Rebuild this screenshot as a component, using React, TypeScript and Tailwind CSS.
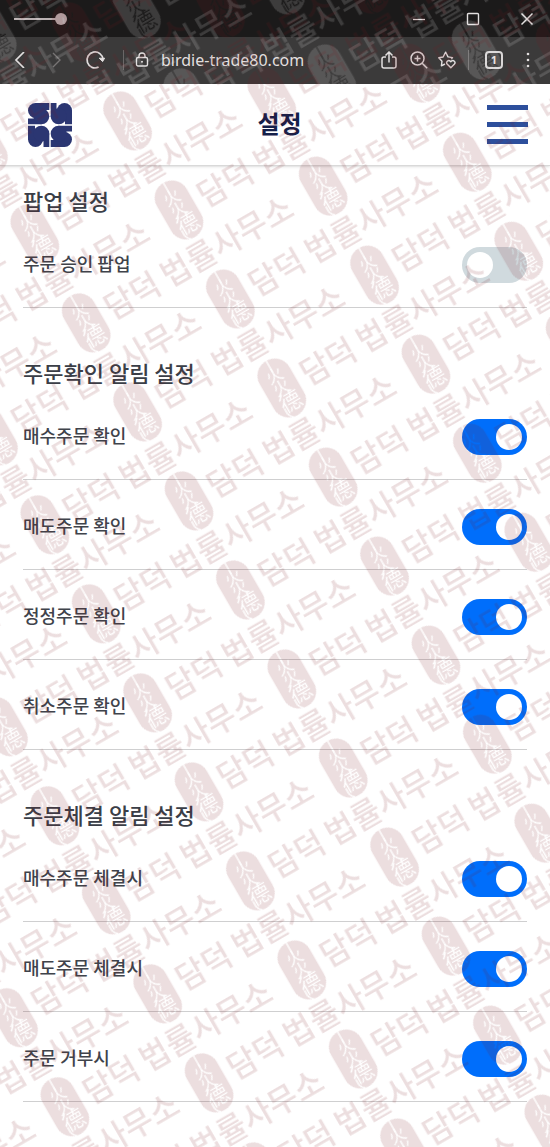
import { useId, useState } from "react";

const sections = [
  { title: "팝업 설정", items: [{ label: "주문 승인 팝업", on: false }] },
  {
    title: "주문확인 알림 설정",
    items: [
      { label: "매수주문 확인", on: true },
      { label: "매도주문 확인", on: true },
      { label: "정정주문 확인", on: true },
      { label: "취소주문 확인", on: true },
    ],
  },
  {
    title: "주문체결 알림 설정",
    items: [
      { label: "매수주문 체결시", on: true },
      { label: "매도주문 체결시", on: true },
      { label: "주문 거부시", on: true },
    ],
  },
];

type WatermarkProps = { x: number; y: number; ink: string };

/* Repeating diagonal stamp: an oval seal followed by the firm's name. */
function Watermark({ x, y, ink }: WatermarkProps) {
  const id = useId();
  const mark = `${id}-mark`;
  const tile = `${id}-tile`;
  const seal = `${id}-seal`;
  return (
    <svg aria-hidden="true" className="pointer-events-none absolute inset-0 h-full w-full">
      <defs>
        <mask id={seal} maskUnits="userSpaceOnUse" x="-20" y="-34" width="40" height="68">
          <rect x="-17.5" y="-31.5" width="35" height="63" rx="17.5" fill="white" />
          <g fill="black" textAnchor="middle" className="font-['Noto_Sans_CJK_KR',sans-serif]">
            <text x="0" y="-8" fontSize="17">火</text>
            <text x="0" y="5" fontSize="17">火</text>
            <text x="1" y="23" fontSize="22">德</text>
          </g>
          <path d="M0-31.5V-18M-8 19V25Q-7 29-4 31" fill="none" stroke="black" strokeWidth="1.4" />
        </mask>
        <g id={mark} fill={ink}>
          <rect x="-17.5" y="-31.5" width="35" height="63" rx="17.5" mask={`url(#${seal})`} />
          <g fontSize="32" className="font-['Noto_Sans_CJK_KR',sans-serif] font-medium">
            <text x="24" y="11">담덕</text>
            <text x="89" y="11">법률사무소</text>
          </g>
        </g>
        <pattern
          id={tile}
          width="273.6"
          height="102.8"
          patternUnits="userSpaceOnUse"
          patternTransform={`translate(${x} ${y}) rotate(-30) translate(-20 -51.4)`}
        >
          <use href={`#${mark}`} x="20" y="51.4" />
          <use href={`#${mark}`} x="156.8" y="0" />
          <use href={`#${mark}`} x="-116.8" y="0" />
          <use href={`#${mark}`} x="156.8" y="102.8" />
          <use href={`#${mark}`} x="-116.8" y="102.8" />
        </pattern>
      </defs>
      <rect width="100%" height="100%" fill={`url(#${tile})`} />
    </svg>
  );
}

function LogoPiece({ turn }: { turn: number }) {
  return (
    <g transform={`rotate(${turn} 22 22)`}>
      <circle cx="7.5" cy="7.5" r="7.5" />
      <path d="M7.5 0H21.3V7H7.5zM0 15.5H13.5V21.3H0z" />
      <circle cx="13.3" cy="13.3" r="8" />
    </g>
  );
}

function Logo() {
  return (
    <svg viewBox="0 0 44 44" className="size-11" fill="#2b3672" aria-hidden="true">
      <LogoPiece turn={0} />
      <LogoPiece turn={90} />
      <LogoPiece turn={180} />
      <LogoPiece turn={270} />
    </svg>
  );
}

function BrowserChrome() {
  return (
    <div className="relative overflow-hidden bg-[#1b1a1a] text-[#e2dfdf]">
      <div className="flex h-[37px] items-center justify-between pr-4 pl-[14px]">
        <svg viewBox="0 0 54 14" className="h-3.5 w-[54px]" fill="#b9b0b1" aria-hidden="true">
          <path d="M0 6h44v2H0z" />
          <circle cx="47" cy="7" r="6" />
        </svg>
        <div className="flex items-center gap-10">
          <button type="button" aria-label="최소화" className="size-3.5">
            <svg viewBox="0 0 14 14" stroke="currentColor" strokeWidth="1.3" fill="none">
              <path d="M1 7.5h12" />
            </svg>
          </button>
          <button type="button" aria-label="최대화" className="size-3.5">
            <svg viewBox="0 0 14 14" stroke="currentColor" strokeWidth="1.4" fill="none">
              <rect x="1.5" y="1.5" width="11" height="11" rx="1" />
            </svg>
          </button>
          <button type="button" aria-label="닫기" className="size-3.5">
            <svg viewBox="0 0 14 14" stroke="currentColor" strokeWidth="1.5" fill="none">
              <path d="M1.5 1.5l11 11M12.5 1.5l-11 11" />
            </svg>
          </button>
        </div>
      </div>
      <div className="flex h-[47px] items-center bg-white/14 pr-[17px] pb-0.5 pl-[13px]">
        <button type="button" aria-label="뒤로" className="size-4">
          <svg viewBox="0 0 16 16" stroke="currentColor" strokeWidth="1.7" fill="none">
            <path d="M11 0L3 8l8 8" />
          </svg>
        </button>
        <button type="button" aria-label="앞으로" className="ml-5 size-4 text-[#777474]">
          <svg viewBox="0 0 16 16" stroke="currentColor" strokeWidth="1.4" fill="none">
            <path d="M4 1l7 7-7 7" />
          </svg>
        </button>
        <button type="button" aria-label="새로고침" className="ml-5 size-5">
          <svg viewBox="0 0 20 20" stroke="currentColor" strokeWidth="1.7" fill="none">
            <path d="M13.6 17.1A8 8 0 1 1 18 9.4" />
            <path d="M14.2 8.2h5.4l-2 3.4z" fill="currentColor" strokeWidth="1" />
          </svg>
        </button>
        <span className="ml-[18px] h-5 w-px bg-[#6a6767]" />
        <svg
          viewBox="0 0 14 16"
          className="ml-[11px] h-4 w-3.5"
          stroke="currentColor"
          strokeWidth="1.4"
          fill="none"
          aria-hidden="true"
        >
          <rect x="1.5" y="5.5" width="11" height="8.5" rx="1.5" />
          <path d="M4 5.5V4a3 3 0 0 1 6 0v1.5" />
          <circle cx="7" cy="9.8" r="1" fill="currentColor" stroke="none" />
        </svg>
        <span className="ml-3 font-['Noto_Sans',sans-serif] text-base">birdie-trade80.com</span>
        <div className="ml-auto flex items-center">
          <button type="button" aria-label="공유" className="size-[18px]">
            <svg viewBox="0 0 18 18" stroke="currentColor" strokeWidth="1.5" fill="none">
              <path d="M6 6H4a2 2 0 0 0-2 2v7a2 2 0 0 0 2 2h10a2 2 0 0 0 2-2V8a2 2 0 0 0-2-2h-2" />
              <path d="M9 11.5V1.2M5.5 4.5L9 1l3.5 3.5" />
            </svg>
          </button>
          <button type="button" aria-label="확대" className="ml-3 size-[18px]">
            <svg viewBox="0 0 18 18" stroke="currentColor" strokeWidth="1.5" fill="none">
              <circle cx="7.5" cy="7.5" r="6.5" />
              <path d="M12.2 12.2l5 5M7.5 4.5v6M4.5 7.5h6" />
            </svg>
          </button>
          <button type="button" aria-label="즐겨찾기" className="ml-2.5 size-[18px]">
            <svg
              viewBox="0 0 18 18"
              stroke="currentColor"
              strokeWidth="1.4"
              strokeLinejoin="round"
              fill="none"
            >
              <path d="M7 13l-3.6 1.8.6-4.6L.8 6.8l4.3-.8L7.7 1.2l2.3 4.7 4.5.7-1.3 1.5" />
              <path d="M12.8 16.8L9.3 13.2a2.1 2.1 0 0 1 3-3l.5.5.5-.5a2.1 2.1 0 0 1 3 3z" />
            </svg>
          </button>
          <span className="ml-3 h-5 w-px bg-[#6a6767]" />
          <button
            type="button"
            aria-label="탭 1개"
            className="ml-4 flex size-[18px] items-center justify-center rounded-[4px] border-2 border-[#d9d6d6] font-['Noto_Sans',sans-serif] text-[11px] leading-none font-bold"
          >
            1
          </button>
          <button type="button" aria-label="메뉴 더보기" className="ml-5 h-4 w-[10px]">
            <svg viewBox="0 0 10 16" fill="currentColor">
              <circle cx="5" cy="2" r="1.3" />
              <circle cx="5" cy="8" r="1.3" />
              <circle cx="5" cy="14" r="1.3" />
            </svg>
          </button>
        </div>
      </div>
      <Watermark x={332} y={74} ink="rgba(255,255,255,0.15)" />
    </div>
  );
}

function SettingRow({ label, on }: { label: string; on: boolean }) {
  const id = useId();
  const [checked, setChecked] = useState(on);
  return (
    <div className="flex items-center justify-between border-b border-[#cfcfd0] pt-[29px] pb-6">
      <label htmlFor={id} className="pb-1 text-lg leading-8 font-medium text-[#3f434b]">
        {label}
      </label>
      <input
        id={id}
        type="checkbox"
        role="switch"
        checked={checked}
        onChange={(e) => setChecked(e.target.checked)}
        className="flex h-9 w-[65px] cursor-pointer appearance-none items-center rounded-full bg-[#d0dade] px-[5px] before:size-[26px] before:rounded-full before:bg-white checked:justify-end checked:bg-[#006efb]"
      />
    </div>
  );
}

export default function App() {
  return (
    <div className="relative min-h-screen overflow-hidden bg-white font-['Noto_Sans_CJK_KR',sans-serif]">
      <BrowserChrome />
      <header className="flex h-[82px] items-center justify-between border-b border-[#d9d9d9] pr-[22px] pl-7 shadow-sm">
        <a href="#home" aria-label="홈">
          <Logo />
        </a>
        <h1 className="pb-1 text-2xl font-bold text-[#14204a]">설정</h1>
        <button type="button" aria-label="메뉴" className="flex w-[41px] flex-col gap-3">
          <span className="h-[5px] bg-[#2d4f9c]" />
          <span className="h-[5px] bg-[#2d4f9c]" />
          <span className="h-[5px] bg-[#2d4f9c]" />
        </button>
      </header>
      <main className="flex flex-col gap-12 px-[23px] pt-[18px] pb-11">
        {sections.map((section) => (
          <section key={section.title}>
            <h2 className="mb-0.5 text-[22px] leading-8 font-medium text-[#3a3e47]">
              {section.title}
            </h2>
            {section.items.map((item) => (
              <SettingRow key={item.label} label={item.label} on={item.on} />
            ))}
          </section>
        ))}
      </main>
      <Watermark x={179} y={210} ink="rgba(120,20,30,0.14)" />
    </div>
  );
}
